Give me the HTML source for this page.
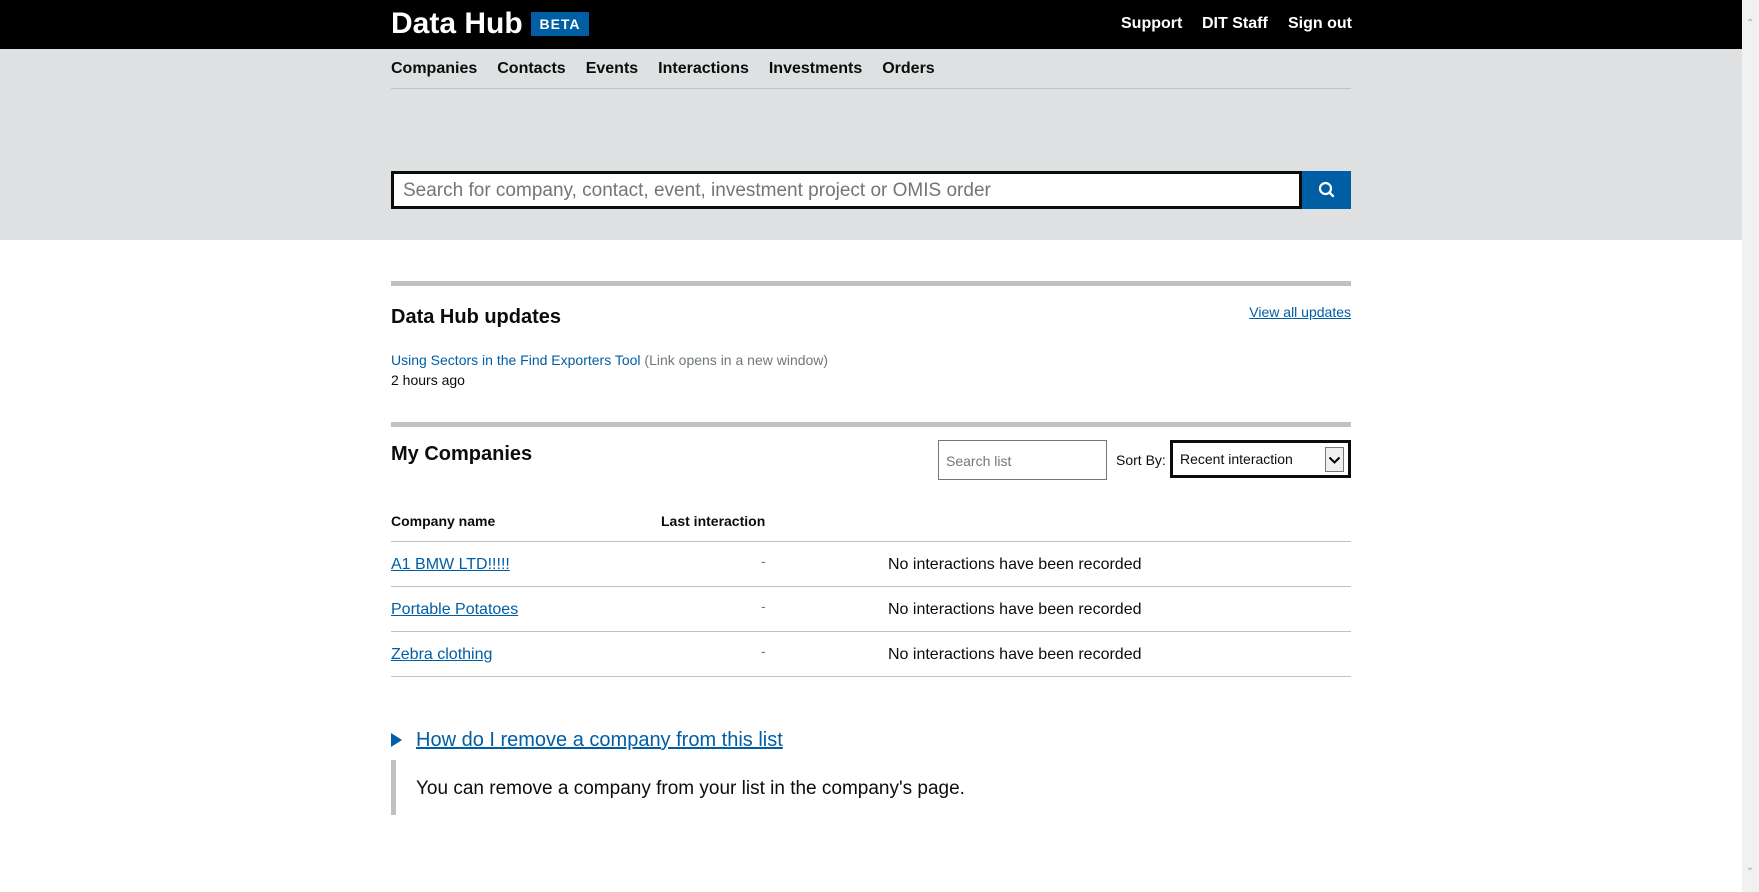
<!DOCTYPE html>
<html><head><meta charset="utf-8"><style>
*{margin:0;padding:0;box-sizing:border-box}
body{width:1759px;height:892px;overflow:hidden;font-family:"Liberation Sans",Arial,sans-serif;background:#fff;position:relative;color:#0b0c0c}
.a{position:absolute;white-space:nowrap}
a{color:#005ea5}
</style></head><body>
<div class="a" style="left:0;top:0;width:1742px;height:49px;background:#000"></div>
<div class="a" style="left:391px;top:6px;font-size:30px;font-weight:bold;color:#fff;line-height:36px">Data Hub</div>
<div class="a" style="left:531px;top:12px;width:58px;height:24px;background:#005ea5;color:#fff;font-weight:bold;font-size:14px;letter-spacing:1px;text-align:center;line-height:24px">BETA</div>
<div class="a" style="left:1121px;top:14px;font-size:16px;font-weight:bold;color:#fff;line-height:20px">Support</div>
<div class="a" style="left:1202px;top:14px;font-size:16px;font-weight:bold;color:#fff;line-height:20px">DIT Staff</div>
<div class="a" style="left:1288px;top:14px;font-size:16px;font-weight:bold;color:#fff;line-height:20px">Sign out</div>
<div class="a" style="left:0;top:49px;width:1742px;height:191px;background:#dee0e2"></div>
<div class="a" style="left:391px;top:59px;font-size:16px;font-weight:bold;line-height:20px">
<span style="margin-right:20px">Companies</span><span style="margin-right:20px">Contacts</span><span style="margin-right:20px">Events</span><span style="margin-right:20px">Interactions</span><span style="margin-right:20px">Investments</span><span>Orders</span></div>
<div class="a" style="left:391px;top:88px;width:960px;height:1px;background:#bfc1c3"></div>
<div class="a" style="left:391px;top:171px;width:911px;height:38px;background:#fff;border:3px solid #0b0c0c;font-size:19px;color:#6f777b;padding-left:9px;line-height:33px">Search for company, contact, event, investment project or OMIS order</div>
<div class="a" style="left:1302px;top:171px;width:49px;height:38px;background:#005ea5">
<svg width="49" height="38" viewBox="0 0 49 38"><circle cx="23.5" cy="17.5" r="5.5" fill="none" stroke="#fff" stroke-width="2.2"/><line x1="27.5" y1="21.5" x2="31" y2="25" stroke="#fff" stroke-width="2.4" stroke-linecap="round"/></svg></div>
<div class="a" style="left:391px;top:281px;width:960px;height:5px;background:#bfc1c3"></div>
<div class="a" style="left:391px;top:305px;font-size:20px;font-weight:bold;line-height:24px">Data Hub updates</div>
<div class="a" style="right:408px;top:303px;text-align:right;font-size:14px;line-height:18px"><a href="#">View all updates</a></div>
<div class="a" style="left:391px;top:351px;font-size:14px;line-height:18px;color:#6f777b"><span style="color:#005ea5">Using Sectors in the Find Exporters Tool</span> (Link opens in a new window)</div>
<div class="a" style="left:391px;top:371px;font-size:14px;line-height:18px">2 hours ago</div>
<div class="a" style="left:391px;top:422px;width:960px;height:5px;background:#bfc1c3"></div>
<div class="a" style="left:391px;top:442px;font-size:20px;font-weight:bold;line-height:24px">My Companies</div>
<div class="a" style="left:938px;top:440px;width:169px;height:40px;border:1px solid #6f777b;font-size:14px;color:#6f777b;padding-left:7px;line-height:40px">Search list</div>
<div class="a" style="left:1116px;top:451px;font-size:14px;line-height:18px">Sort By:</div>
<div class="a" style="left:1170px;top:440px;width:181px;height:38px;border:3px solid #0b0c0c;font-size:14px;padding-left:7px;line-height:33px">Recent interaction
<div style="position:absolute;right:4px;top:4px;width:19px;height:25px;background:#efefef;border:1px solid #777"><svg width="17" height="23" viewBox="0 0 17 23"><path d="M3.5 9.5 L8.5 14.5 L13.5 9.5" fill="none" stroke="#000" stroke-width="2"/></svg></div></div>
<div class="a" style="left:391px;top:513px;font-size:14px;font-weight:bold;line-height:17px">Company name</div>
<div class="a" style="left:661px;top:513px;font-size:14px;font-weight:bold;line-height:17px">Last interaction</div>
<div class="a" style="left:391px;top:541px;width:960px;height:1px;background:#bfc1c3"></div>
<div class="a" style="left:391px;top:586px;width:960px;height:1px;background:#bfc1c3"></div>
<div class="a" style="left:391px;top:631px;width:960px;height:1px;background:#bfc1c3"></div>
<div class="a" style="left:391px;top:676px;width:960px;height:1px;background:#bfc1c3"></div>
<div class="a" style="left:391px;top:555px;font-size:16px;line-height:19px"><a href="#">A1 BMW LTD!!!!!</a></div>
<div class="a" style="left:391px;top:600px;font-size:16px;line-height:19px"><a href="#">Portable Potatoes</a></div>
<div class="a" style="left:391px;top:645px;font-size:16px;line-height:19px"><a href="#">Zebra clothing</a></div>
<div class="a" style="left:761px;top:553px;font-size:14px;color:#6f777b">-</div>
<div class="a" style="left:761px;top:598px;font-size:14px;color:#6f777b">-</div>
<div class="a" style="left:761px;top:643px;font-size:14px;color:#6f777b">-</div>
<div class="a" style="left:888px;top:555px;font-size:16px;line-height:19px">No interactions have been recorded</div>
<div class="a" style="left:888px;top:600px;font-size:16px;line-height:19px">No interactions have been recorded</div>
<div class="a" style="left:888px;top:645px;font-size:16px;line-height:19px">No interactions have been recorded</div>
<svg class="a" style="left:391px;top:733px" width="12" height="14"><path d="M0 0 L11 7 L0 14Z" fill="#005ea5"/></svg>
<div class="a" style="left:416px;top:728px;font-size:20px;line-height:24px"><a href="#">How do I remove a company from this list</a></div>
<div class="a" style="left:391px;top:760px;width:5px;height:55px;background:#bfc1c3"></div>
<div class="a" style="left:416px;top:777px;font-size:19px;line-height:23px">You can remove a company from your list in the company's page.</div>
<div class="a" style="left:1742px;top:0;width:17px;height:892px;background:#f1f1f1"></div>
<div class="a" style="left:1746px;top:18px;font-size:10px;color:#a3a3a3">&#8963;</div>
<div class="a" style="left:1746px;top:862px;font-size:10px;color:#a3a3a3">&#8964;</div>
</body></html>
